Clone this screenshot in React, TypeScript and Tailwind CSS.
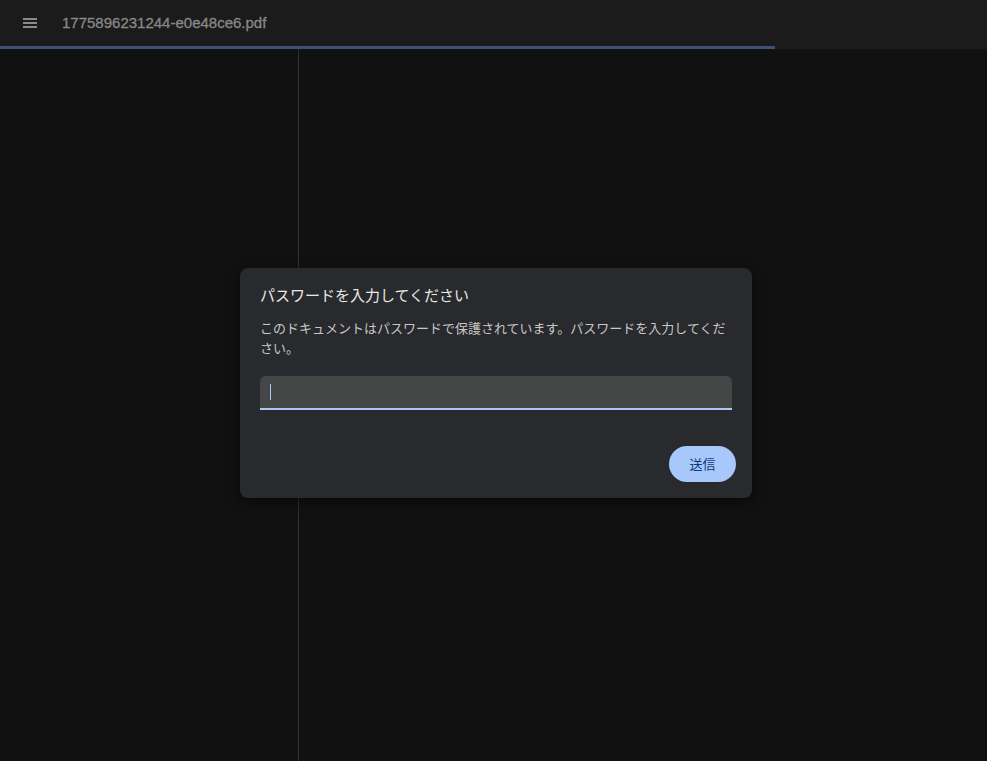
export default function App() {
  return (
    <div className="relative h-[761px] w-[987px] overflow-hidden bg-[#111111] font-['Roboto','Noto_Sans_CJK_JP',sans-serif]">
      <header className="relative h-[49px] bg-[#1b1b1b]">
        <div className="flex h-[46px] items-center">
          <button className="ml-[23px] flex h-[16px] w-[16px] flex-col justify-center gap-[2.5px]">
            <span className="block h-[1.5px] w-[14px] bg-[#8a8a8a]" />
            <span className="block h-[1.5px] w-[14px] bg-[#8a8a8a]" />
            <span className="block h-[1.5px] w-[14px] bg-[#8a8a8a]" />
          </button>
          <span className="ml-[23px] font-['Liberation_Sans',Arial,sans-serif] text-[15px] text-[#888888] [-webkit-text-stroke:0.3px_#888888]">
            1775896231244-e0e48ce6.pdf
          </span>
        </div>
        <div className="absolute bottom-0 left-0 h-[3px] w-[775px] bg-[#3c5274]" />
      </header>

      <div className="flex h-[712px]">
        <aside className="w-[299px] border-r border-[#303030] bg-[#111111]" />
        <main className="flex-1 bg-[#111111]" />
      </div>

      <div className="absolute left-[240px] top-[268px] w-[512px] rounded-[8px] bg-[#292a2d] px-[20px] pb-[16px] pt-[17px] shadow-[0_4px_14px_rgba(0,0,0,0.55)] font-['Noto_Sans_CJK_JP','Roboto',sans-serif]">
        <h2 className="text-[15px] leading-[20px] text-[#e8e8e8]">パスワードを入力してください</h2>
        <p className="mt-[13px] text-[13px] leading-[20px] text-[#c7c7c7]">
          このドキュメントはパスワードで保護されています。パスワードを入力してください。
        </p>
        <div className="mt-[18px] flex h-[34px] items-center rounded-t-[6px] border-b-2 border-[#a8c7fa] bg-[#444746] pl-[10px]">
          <span className="block h-[16px] w-[1px] bg-[#a8c7fa]" />
        </div>
        <div className="mt-[36px] flex justify-end">
          <button className="-mr-[4px] h-[36px] w-[67px] rounded-full bg-[#a8c7fa] text-[13px] text-[#0b3a78]">送信</button>
        </div>
      </div>
    </div>
  );
}
